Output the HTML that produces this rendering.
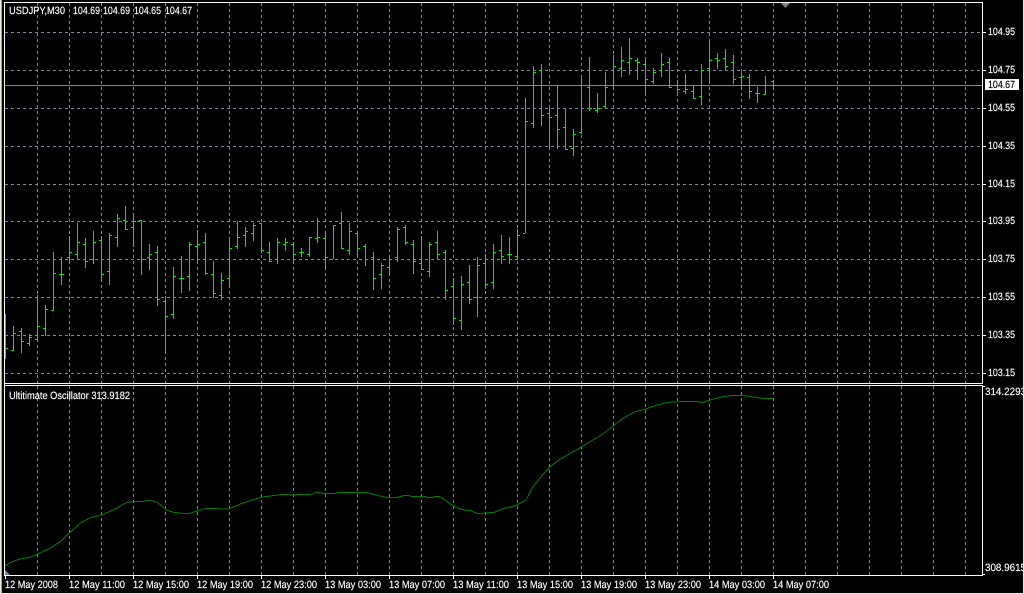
<!DOCTYPE html>
<html><head><meta charset="utf-8"><title>USDJPY,M30</title>
<style>html,body{margin:0;padding:0;background:#000;width:1024px;height:594px;overflow:hidden}svg{display:block}text{font-family:"Liberation Sans",sans-serif;font-size:10.5px;fill:#fff;stroke:#fff;stroke-width:.15px;text-rendering:geometricPrecision}</style></head><body>
<svg width="1024" height="594" viewBox="0 0 1024 594" xmlns="http://www.w3.org/2000/svg">
<rect width="1024" height="594" fill="#000"/>
<g fill="none" stroke="#778899" stroke-width="1" stroke-dasharray="3 3" shape-rendering="crispEdges">
<path d="M5 32.5H982M5 70.5H982M5 108.5H982M5 146.5H982M5 184.5H982M5 221.5H982M5 259.5H982M5 297.5H982M5 335.5H982M5 373.5H982"/>
<path d="M37.5 3V383M69.5 3V383M101.5 3V383M133.5 3V383M165.5 3V383M197.5 3V383M229.5 3V383M261.5 3V383M293.5 3V383M325.5 3V383M357.5 3V383M389.5 3V383M421.5 3V383M453.5 3V383M485.5 3V383M517.5 3V383M549.5 3V383M581.5 3V383M613.5 3V383M645.5 3V383M677.5 3V383M709.5 3V383M741.5 3V383M773.5 3V383M805.5 3V383M837.5 3V383M869.5 3V383M901.5 3V383M933.5 3V383M965.5 3V383"/>
<path d="M37.5 386V575M69.5 386V575M101.5 386V575M133.5 386V575M165.5 386V575M197.5 386V575M229.5 386V575M261.5 386V575M293.5 386V575M325.5 386V575M357.5 386V575M389.5 386V575M421.5 386V575M453.5 386V575M485.5 386V575M517.5 386V575M549.5 386V575M581.5 386V575M613.5 386V575M645.5 386V575M677.5 386V575M709.5 386V575M741.5 386V575M773.5 386V575M805.5 386V575M837.5 386V575M869.5 386V575M901.5 386V575M933.5 386V575M965.5 386V575"/>
</g>
<path d="M5 85.5H982" stroke="#778899" fill="none" shape-rendering="crispEdges"/>
<path fill="none" stroke="#00f000" shape-rendering="crispEdges" d="M5.5 314V359M6 348.5h2
M13.5 326V351M11 350.5h2M14 333.5h2
M21.5 328V353M19 331.5h2M22 341.5h2
M29.5 334V346M27 343.5h2M30 337.5h2
M37.5 295V342M35 339.5h2M38 326.5h2
M45.5 305V336M43 328.5h2M46 309.5h2
M53.5 252V311M51 310.5h2M54 273.5h2
M61.5 257V285M59 274.5h2M62 274.5h2
M69.5 236V263M67 257.5h2M70 252.5h2
M77.5 223V260M75 254.5h2M78 242.5h2
M85.5 238V268M83 244.5h2M86 261.5h2
M93.5 231V264M91 259.5h2M94 242.5h2
M101.5 236V281M99 240.5h2M102 274.5h2
M109.5 233V285M107 271.5h2M110 235.5h2
M117.5 214V247M115 237.5h2M118 218.5h2
M125.5 206V230M123 220.5h2M126 229.5h2
M133.5 216V247M131 227.5h2M134 221.5h2
M141.5 220V275M139 220.5h2M142 259.5h2
M149.5 244V270M147 257.5h2M150 254.5h2
M157.5 246V306M155 252.5h2M158 299.5h2
M165.5 296V353M163 301.5h2M166 316.5h2
M173.5 267V319M171 314.5h2M174 276.5h2
M181.5 256V293M179 278.5h2M182 278.5h2
M189.5 242V291M187 276.5h2M190 244.5h2
M197.5 230V262M195 246.5h2M198 244.5h2
M205.5 233V275M203 242.5h2M206 273.5h2
M213.5 261V298M211 274.5h2M214 293.5h2
M221.5 273V300M219 295.5h2M222 280.5h2
M229.5 240V287M227 278.5h2M230 248.5h2
M237.5 221V249M235 246.5h2M238 237.5h2
M245.5 227V247M243 235.5h2M246 231.5h2
M253.5 223V241M251 233.5h2M254 225.5h2
M261.5 223V253M259 223.5h2M262 250.5h2
M269.5 242V262M267 252.5h2M270 261.5h2
M277.5 238V264M275 259.5h2M278 242.5h2
M285.5 238V251M283 244.5h2M286 242.5h2
M293.5 242V264M291 244.5h2M294 254.5h2
M301.5 248V257M299 252.5h2M302 252.5h2
M309.5 237V257M307 254.5h2M310 237.5h2
M317.5 218V243M315 238.5h2M318 237.5h2
M325.5 231V270M323 238.5h2M326 257.5h2
M333.5 225V259M331 259.5h2M334 225.5h2
M341.5 212V249M339 223.5h2M342 248.5h2
M349.5 223V255M347 250.5h2M350 231.5h2
M357.5 231V258M355 233.5h2M358 248.5h2
M365.5 244V266M363 246.5h2M366 259.5h2
M373.5 252V290M371 257.5h2M374 278.5h2
M381.5 263V289M379 274.5h2M382 265.5h2
M389.5 257V275M387 267.5h2M390 259.5h2
M397.5 227V262M395 257.5h2M398 229.5h2
M405.5 225V245M403 227.5h2M406 242.5h2
M413.5 240V274M411 244.5h2M414 261.5h2
M421.5 236V270M419 263.5h2M422 269.5h2
M429.5 242V277M427 271.5h2M430 244.5h2
M437.5 231V260M435 242.5h2M438 254.5h2
M445.5 250V300M443 252.5h2M446 290.5h2
M453.5 278V325M451 286.5h2M454 318.5h2
M461.5 276V330M459 320.5h2M462 284.5h2
M469.5 265V304M467 282.5h2M470 299.5h2
M477.5 257V317M475 297.5h2M478 265.5h2
M485.5 254V289M483 263.5h2M486 284.5h2
M493.5 244V289M491 282.5h2M494 252.5h2
M501.5 235V264M499 250.5h2M502 256.5h2
M509.5 237V264M507 254.5h2M510 254.5h2
M517.5 229V260M515 256.5h2M518 235.5h2
M525.5 98V233M523 233.5h2M526 121.5h2
M533.5 66V128M531 123.5h2M534 72.5h2
M541.5 64V126M539 70.5h2M542 115.5h2
M549.5 108V148M547 113.5h2M550 117.5h2
M557.5 85V149M555 115.5h2M558 129.5h2
M565.5 108V150M563 127.5h2M566 149.5h2
M573.5 129V156M571 148.5h2M574 134.5h2
M581.5 75V134M579 132.5h2M582 85.5h2
M589.5 57V111M587 87.5h2M590 108.5h2
M597.5 93V113M595 110.5h2M598 108.5h2
M605.5 72V108M603 106.5h2M606 87.5h2
M613.5 55V90M611 85.5h2M614 66.5h2
M621.5 47V77M619 68.5h2M622 60.5h2
M629.5 38V75M627 62.5h2M630 58.5h2
M637.5 58V80M635 60.5h2M638 62.5h2
M645.5 60V95M643 64.5h2M646 79.5h2
M653.5 68V84M651 81.5h2M654 72.5h2
M661.5 53V77M659 70.5h2M662 64.5h2
M669.5 58V88M667 62.5h2M670 87.5h2
M677.5 80V95M675 85.5h2M678 89.5h2
M685.5 74V94M683 91.5h2M686 89.5h2
M693.5 85V99M691 91.5h2M694 98.5h2
M701.5 64V105M699 96.5h2M702 70.5h2
M709.5 41V84M707 68.5h2M710 60.5h2
M717.5 53V69M715 58.5h2M718 60.5h2
M725.5 49V71M723 58.5h2M726 66.5h2
M733.5 55V84M731 62.5h2M734 79.5h2
M741.5 72V90M739 77.5h2M742 76.5h2
M749.5 74V99M747 77.5h2M750 91.5h2
M757.5 87V103M755 93.5h2M758 93.5h2
M765.5 76V95M763 94.5h2M766 85.5h2
M773.5 80V90M771 81.5h2M774 85.5h2"/>
<polyline fill="none" stroke="#008000" stroke-width="1" shape-rendering="crispEdges" points="5,566 10,562.7 20,559 30,557.3 37,554.3 50,548.3 60,541.7 69,533.3 80,523.3 90,517.7 101.7,515 113,510 125,503.3 133,501.3 143,501.3 150,500.3 157,502.3 167,510 173,512.3 182,513.3 190,513.3 200,510 207,508.3 217,508.7 228,509.3 240,504.3 250,500.7 262,497 273,495.7 280,494.7 290,494.7 293,495.7 297,494.3 311,494.3 315,492.7 321,492.7 324,493.7 335,493.7 337,492.7 367,492.7 375,494.7 380,496 387,497.3 398,497.3 403,495.7 409,495.7 411,496.3 425,496.3 427,497.3 433,497.3 434,496.3 439,496.3 443,498.7 453,505.7 461,509.3 471,510.7 477,513.3 482,513.3 494,512.3 500,510 504,508.3 512,506.7 517,505 526,500 533,486.7 541.7,476 550,466.7 560,459.3 573,451.7 581,447.3 593,440 603,434 613,426 623,418.3 635,411.7 645,409.3 657,405 668,402.3 680,401.7 697,401.3 702,402.7 710,400 723,396.7 733,395.3 743,395.3 753,397 763,398.3 773,398.7"/>
<polygon points="5,570 5,575 10,575" fill="#778899"/>
<polygon points="781,3 790,3 785.5,8" fill="#778899"/>
<path fill="none" stroke="#fff" shape-rendering="crispEdges" d="M4 2.5H983M982.5 2V384M4 383.5H983M4 385.5H983M982.5 385V576M4 575.5H983M4.5 2V576
M983 32.5h3M983 70.5h3M983 108.5h3M983 146.5h3M983 184.5h3M983 221.5h3M983 259.5h3M983 297.5h3M983 335.5h3M983 373.5h3M983 386.5h2M983 574.5h2
M5.5 576v3M69.5 576v3M133.5 576v3M197.5 576v3M261.5 576v3M325.5 576v3M389.5 576v3M453.5 576v3M517.5 576v3M581.5 576v3M645.5 576v3M709.5 576v3M773.5 576v3"/>
<rect x="985" y="79" width="34" height="11" fill="#fff"/>
<text x="9" y="14" textLength="56" lengthAdjust="spacingAndGlyphs">USDJPY,M30</text>
<text x="73" y="14" textLength="27" lengthAdjust="spacingAndGlyphs">104.69</text>
<text x="103" y="14" textLength="27" lengthAdjust="spacingAndGlyphs">104.69</text>
<text x="134" y="14" textLength="27" lengthAdjust="spacingAndGlyphs">104.65</text>
<text x="165" y="14" textLength="27" lengthAdjust="spacingAndGlyphs">104.67</text>
<text x="9" y="399" textLength="121" lengthAdjust="spacingAndGlyphs">Ultitimate Oscillator 313.9182</text>
<text x="988" y="35" textLength="27" lengthAdjust="spacingAndGlyphs">104.95</text>
<text x="988" y="73" textLength="27" lengthAdjust="spacingAndGlyphs">104.75</text>
<text x="988" y="88" textLength="27" lengthAdjust="spacingAndGlyphs" style="fill:#000;stroke:#000">104.67</text>
<text x="988" y="111" textLength="27" lengthAdjust="spacingAndGlyphs">104.55</text>
<text x="988" y="149" textLength="27" lengthAdjust="spacingAndGlyphs">104.35</text>
<text x="988" y="187" textLength="27" lengthAdjust="spacingAndGlyphs">104.15</text>
<text x="988" y="224" textLength="27" lengthAdjust="spacingAndGlyphs">103.95</text>
<text x="988" y="262" textLength="27" lengthAdjust="spacingAndGlyphs">103.75</text>
<text x="988" y="300" textLength="27" lengthAdjust="spacingAndGlyphs">103.55</text>
<text x="988" y="338" textLength="27" lengthAdjust="spacingAndGlyphs">103.35</text>
<text x="988" y="376" textLength="27" lengthAdjust="spacingAndGlyphs">103.15</text>
<text x="985" y="395" textLength="41" lengthAdjust="spacingAndGlyphs">314.2293</text>
<text x="985" y="571" textLength="41" lengthAdjust="spacingAndGlyphs">308.9615</text>
<text x="5" y="588" textLength="53" lengthAdjust="spacingAndGlyphs">12 May 2008</text>
<text x="69" y="588" textLength="56" lengthAdjust="spacingAndGlyphs">12 May 11:00</text>
<text x="133" y="588" textLength="56" lengthAdjust="spacingAndGlyphs">12 May 15:00</text>
<text x="197" y="588" textLength="56" lengthAdjust="spacingAndGlyphs">12 May 19:00</text>
<text x="261" y="588" textLength="56" lengthAdjust="spacingAndGlyphs">12 May 23:00</text>
<text x="325" y="588" textLength="56" lengthAdjust="spacingAndGlyphs">13 May 03:00</text>
<text x="389" y="588" textLength="56" lengthAdjust="spacingAndGlyphs">13 May 07:00</text>
<text x="453" y="588" textLength="56" lengthAdjust="spacingAndGlyphs">13 May 11:00</text>
<text x="517" y="588" textLength="56" lengthAdjust="spacingAndGlyphs">13 May 15:00</text>
<text x="581" y="588" textLength="56" lengthAdjust="spacingAndGlyphs">13 May 19:00</text>
<text x="645" y="588" textLength="56" lengthAdjust="spacingAndGlyphs">13 May 23:00</text>
<text x="709" y="588" textLength="56" lengthAdjust="spacingAndGlyphs">14 May 03:00</text>
<text x="773" y="588" textLength="56" lengthAdjust="spacingAndGlyphs">14 May 07:00</text>
<rect x="0" y="0" width="1" height="594" fill="#ece9d8"/>
<rect x="1" y="0" width="1" height="594" fill="#aca899"/>
<rect x="0" y="593" width="1024" height="1" fill="#ece9d8"/>
<rect x="1023" y="0" width="1" height="594" fill="#ece9d8"/>
</svg>
</body></html>
